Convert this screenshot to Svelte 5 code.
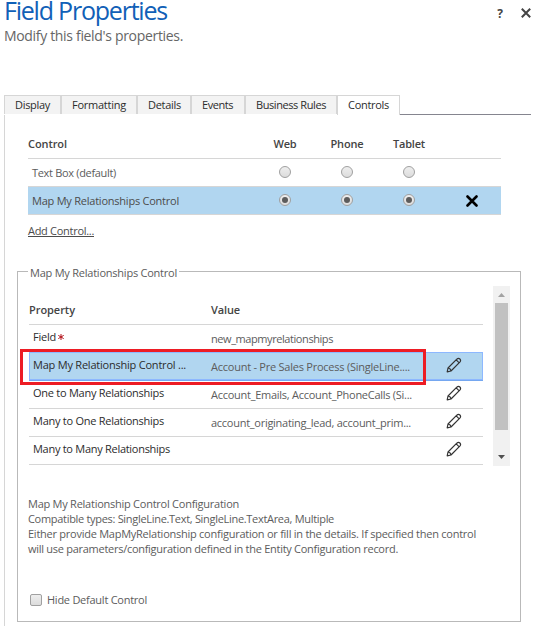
<script>
  const tabs = [
    { label: 'Display', w: 35, box: 57 },
    { label: 'Formatting', w: 54, box: 76 },
    { label: 'Details', w: 33, box: 54 },
    { label: 'Events', w: 31, box: 54 },
    { label: 'Business Rules', w: 70, box: 92 },
    { label: 'Controls', w: 41, box: 63, active: true }
  ];
  const controls = [
    { name: 'Text Box (default)', w: 84, selected: false },
    { name: 'Map My Relationships Control', w: 147, selected: true }
  ];
  const properties = [
    { name: 'Field', w: 23, value: 'new_mapmyrelationships', vw: 122, required: true },
    { name: 'Map My Relationship Control ...', w: 153, value: 'Account - Pre Sales Process (SingleLine....', vw: 199, selected: true, edit: true },
    { name: 'One to Many Relationships', w: 131, value: 'Account_Emails, Account_PhoneCalls (Si...', vw: 201, edit: true },
    { name: 'Many to One Relationships', w: 131, value: 'account_originating_lead, account_prim...', vw: 200, edit: true },
    { name: 'Many to Many Relationships', w: 137, value: '', vw: 0, edit: true }
  ];
  const description = [
    ['Map My Relationship Control Configuration', 211],
    ['Compatible types: SingleLine.Text, SingleLine.TextArea, Multiple', 306],
    ['Either provide MapMyRelationship configuration or fill in the details. If specified then control', 448],
    ['will use parameters/configuration defined in the Entity Configuration record.', 370]
  ];

  // Tracks a label so that it takes up the given width.
  function fit(node, width) {
    const count = node.textContent.length;
    const natural = node.getBoundingClientRect().width;
    if (width && count > 1) node.style.letterSpacing = (width - natural) / count + 'px';
  }
</script>

{#snippet t(text, width)}<span class="t" use:fit={width}>{text}</span>{/snippet}

{#snippet pencil()}
  <svg class="pencil" width="16" height="16" viewBox="0 0 16 16">
    <path d="M1.2 14.8 2 11 10.8 2.2Q12.4.7 13.9 2 15.3 3.5 13.8 5.2L5 14ZM2 11Q4.6 11.4 5 14M10.2 2.8 13.2 5.8" />
  </svg>
{/snippet}

<div class="dialog">
  <header>
    <div>
      <h1>{@render t('Field Properties', 163)}</h1>
      <p>{@render t("Modify this field's properties.", 179)}</p>
    </div>
    <div class="actions">
      <span class="help">?</span>
      <svg width="10" height="10" viewBox="0 0 10 10"><path d="M.8.8 9.2 9.2M9.2.8.8 9.2" /></svg>
    </div>
  </header>

  <nav>
    {#each tabs as tab}
      <div class="tab" class:active={tab.active} style:width="{tab.box}px">{@render t(tab.label, tab.w)}</div>
    {/each}
    <div class="rule"></div>
  </nav>

  <main>
    <section class="controls">
      <div class="crow chead">
        <div>{@render t('Control', 39)}</div>
        <div class="c">{@render t('Web', 23)}</div>
        <div class="c">{@render t('Phone', 33)}</div>
        <div class="c">{@render t('Tablet', 32)}</div>
      </div>
      {#each controls as row}
        <div class="crow" class:selected={row.selected}>
          <div class="name">{@render t(row.name, row.w)}</div>
          {#each [0, 1, 2] as _}
            <div class="c"><i class="radio" class:on={row.selected}></i></div>
          {/each}
          {#if row.selected}
            <div class="c remove">
              <svg width="12" height="12" viewBox="0 0 12 12"><path d="M1.5 1.5 10.5 10.5M10.5 1.5 1.5 10.5" /></svg>
            </div>
          {/if}
        </div>
      {/each}
    </section>
    <div class="add">{@render t('Add Control...', 66)}</div>

    <section class="group">
      <div class="legend">{@render t('Map My Relationships Control', 147)}</div>
      <div class="grid">
        <div class="props">
          <div class="prow phead">
            <div>{@render t('Property', 46)}</div>
            <div>{@render t('Value', 29)}</div>
          </div>
          {#each properties as p}
            <div class="prow" class:selected={p.selected}>
              <div class="pname">
                {@render t(p.name, p.w)}{#if p.required}<svg class="star" width="6" height="6" viewBox="0 0 6 6"><path d="M3 0V6M.3 1.4 5.7 4.6M5.7 1.4.3 4.6" /></svg>{/if}
              </div>
              <div class="pvalue">{@render t(p.value, p.vw)}</div>
              {#if p.edit}<div class="edit">{@render pencil()}</div>{/if}
            </div>
          {/each}
          <div class="marker"></div>
        </div>
        <div class="scroll">
          <svg width="17" height="17" viewBox="0 0 17 17"><path d="M5 11 8.5 7 12 11Z" fill="#a3a3a3" /></svg>
          <div class="thumb"></div>
          <svg width="17" height="17" viewBox="0 0 17 17"><path d="M5 6 8.5 10 12 6Z" fill="#505050" /></svg>
        </div>
      </div>
      <div class="desc">
        {#each description as [line, w]}
          <div>{@render t(line, w)}</div>
        {/each}
      </div>
      <div class="hide"><i class="check"></i>{@render t('Hide Default Control', 100)}</div>
    </section>
  </main>
</div>

<style>
  :global(body) { background: #fff; overflow: hidden; }
  .dialog {
    width: 537px; height: 626px; overflow: hidden; box-sizing: border-box;
    padding-left: 4px; display: flex; flex-direction: column;
    font: 11px/15px "Open Sans", "Noto Sans", sans-serif; color: #444; background: #fff;
  }
  .t { display: inline-block; white-space: nowrap; vertical-align: top; }
  header { height: 95px; flex: none; display: flex; justify-content: space-between; }
  h1 { margin: 0; font-size: 25px; line-height: 21px; font-weight: 400; color: #1160b7; height: 26px; }
  p { margin: 0; font-size: 14px; line-height: 19px; color: #666; }
  .actions { display: flex; align-items: flex-start; padding: 8px 6px 0 0; }
  .actions svg { width: 10px; height: 10px; }
  .help { font-size: 12px; line-height: 12px; font-weight: 700; color: #444; margin-right: 18px; }
  .actions path { stroke: #444; stroke-width: 2; fill: none; }

  nav { display: flex; height: 20px; flex: none; }
  .tab {
    box-sizing: border-box; height: 19px; line-height: 18px; padding-left: 10px; flex: none;
    background: #f3f3f3; border: 1px solid #d6d6d6; border-bottom: 0; color: #2c2c2c;
  }
  .tab.active { background: #fff; height: 20px; }
  .rule { width: 131px; border-bottom: 1px solid #85858f; }

  main { flex: 1; border-left: 1px solid #d6d6d6; display: flex; flex-direction: column; }
  .controls { margin: 15px 0 0 23px; width: 473px; }
  .crow {
    display: grid; grid-template-columns: 226px 62px 62px 62px 61px; height: 28px;
    box-sizing: border-box; border-bottom: 1px solid #d6d6d6; align-items: center;
  }
  .chead { height: 29px; font-weight: 600; color: #444; padding-bottom: 2px; }
  .name { padding: 0 0 0 4px; color: #5c5c5c; }
  .c { display: flex; justify-content: center; }
  .crow .c { padding-bottom: 1px; }
  .chead .c { padding-bottom: 0; }
  .crow.selected { background: #b1d6f0; }
  .crow.selected .name { color: #4c4c4c; }
  .radio {
    box-sizing: border-box; width: 12px; height: 12px; border-radius: 50%; border: 1px solid #a0a0a0;
    background: linear-gradient(#eee, #dcdcdc); display: flex; align-items: center; justify-content: center;
  }
  .radio.on::after { content: ""; width: 6px; height: 6px; border-radius: 50%; background: #5c5c5c; }
  .crow .remove { padding: 0 0 0 3px; }
  .remove path { stroke: #000; stroke-width: 2.6; stroke-linecap: round; }
  .add { margin: 8px 0 0 23px; height: 15px; }
  .add :global(.t) { text-decoration: underline; color: #4c4c4c; }

  .group {
    box-sizing: border-box; margin: 33px 0 0 12px; width: 504px; height: 351px;
    border: 1px solid #b9b9b9; display: flex; flex-direction: column;
  }
  .legend { margin: -7px 0 0 10px; padding: 0 2px; background: #fff; width: 147px; height: 15px; color: #5c5c5c; flex: none; }
  .grid { display: flex; margin: 6px 0 0 11px; height: 180px; flex: none; }
  .props { width: 454px; margin-right: 10px; position: relative; }
  .prow {
    display: grid; grid-template-columns: 183px 234px 37px; height: 28px;
    box-sizing: border-box; border-bottom: 1px solid #d6d6d6;
  }
  .phead { height: 39px; font-weight: 600; color: #444; padding: 16px 0 0; }
  .pname { padding: 4px 0 0 4px; color: #2c2c2c; height: 15px; white-space: nowrap; }
  .pvalue { padding: 6px 0 0; height: 15px; color: #5c5c5c; margin-left: -1px; }
  .phead > div:nth-child(2) { margin-left: -1px; }
  .edit { padding-top: 4px; height: 16px; line-height: 0; }
  .prow.selected { background: #b1d6f0; box-shadow: inset 0 0 0 1px #8db8ff; height: 29px; margin-top: -1px; padding-top: 1px; border-bottom: 1px solid #75a7f0; }
  .star { margin: 5px 0 0 2px; vertical-align: top; }
  .star path { stroke: #b3131b; stroke-width: 1; }
  .pencil path { fill: none; stroke: #333; stroke-width: 1.2; stroke-linejoin: round; }
  .marker { position: absolute; left: -9px; top: 63px; width: 406px; height: 36px; box-sizing: border-box; border: 3px solid #ed1c24; }
  .scroll { width: 17px; height: 180px; background: #f1f1f1; display: flex; flex-direction: column; align-items: center; }
  .scroll svg { flex: none; }
  .thumb { width: 13px; height: 127px; background: #c1c1c1; margin-bottom: 19px; flex: none; }
  .desc { margin: 30px 0 0 10px; color: #5c5c5c; }
  .desc > div { height: 15px; }
  .hide { display: flex; align-items: center; gap: 5px; margin: 36px 0 0 12px; color: #5c5c5c; }
  .check {
    box-sizing: border-box; width: 12px; height: 12px; border: 1px solid #a0a0a0; border-radius: 2px;
    background: linear-gradient(#eee, #dcdcdc);
  }
</style>
